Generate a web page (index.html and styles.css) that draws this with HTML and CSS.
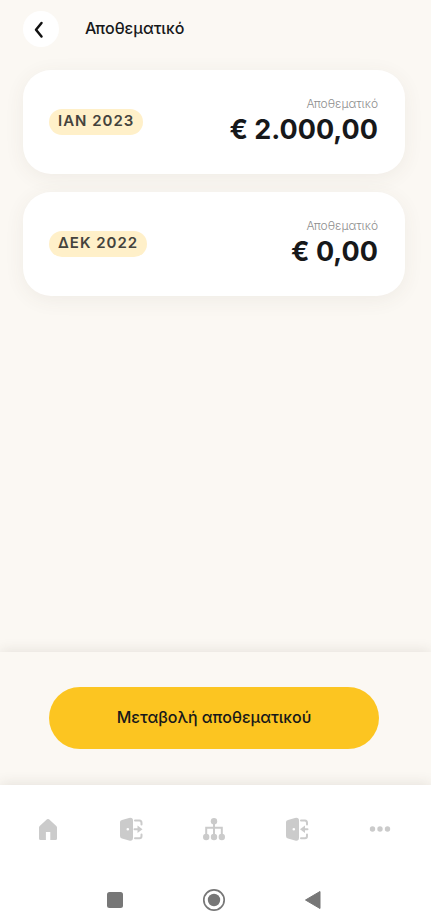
FILE: index.html
```html
<!DOCTYPE html>
<html lang="el">
<head>
<meta charset="utf-8">
<meta name="viewport" content="width=device-width, initial-scale=1">
<title>Αποθεματικό</title>
<link rel="stylesheet" href="styles.css">
</head>
<body>
<header class="topbar">
  <button class="back" type="button" aria-label="Πίσω">
    <svg width="36" height="36" viewBox="0 0 36 36"><path d="M18.500 12L13 18.700L18.500 25.500" fill="none" stroke="#111" stroke-width="2.500" stroke-linecap="round" stroke-linejoin="round"/></svg>
  </button>
  <h1 class="title">Αποθεματικό</h1>
</header>
<main class="list">
  <article class="card">
    <span class="badge">ΙΑΝ 2023</span>
    <div class="reserve">
      <span class="label">Αποθεματικό</span>
      <strong class="amount">€ 2.000,00</strong>
    </div>
  </article>
  <article class="card">
    <span class="badge">ΔΕΚ 2022</span>
    <div class="reserve">
      <span class="label">Αποθεματικό</span>
      <strong class="amount">€ 0,00</strong>
    </div>
  </article>
</main>
<section class="action">
  <button class="primary" type="button">Μεταβολή αποθεματικού</button>
</section>
<footer class="bottom">
  <nav class="tabs">
    <a class="tab" href="#home" aria-label="Αρχική">
      <svg width="24" height="24" viewBox="0 0 24 24"><path d="M11 2.300Q12 1.500 13 2.300L20.300 9Q21 9.700 21 10.500V21.500Q21 23 19.500 23H14.300V15H9.900V23H4.500Q3 23 3 21.500V10.500Q3 9.700 3.700 9Z"/></svg>
    </a>
    <a class="tab" href="#out" aria-label="Έξοδος">
      <svg width="24" height="24" viewBox="0 0 24 24"><path fill-rule="evenodd" d="M3 3L10 1Q14 .3 14 3.500V20.500Q14 24.500 10 23.500L3 21.500Q1 21 1 19V5Q1 3.500 3 3ZM8.800 11A1.300 1.300 0 1 0 8.800 13.600A1.300 1.300 0 1 0 8.800 11Z"/><path class="line" d="M16 3.500H20.500Q22.500 3.500 22.500 6V7.500M16 21.200H20.500Q22.500 21.200 22.500 19V17.500M15.500 12.300H19"/><path d="M18.500 8.500L23.500 12.300L18.500 16Z"/></svg>
    </a>
    <a class="tab" href="#structure" aria-label="Δομή">
      <svg width="24" height="24" viewBox="0 0 24 24"><circle cx="12" cy="4.200" r="3.200"/><circle cx="4.200" cy="20" r="3.200"/><circle cx="12" cy="20" r="3.200"/><circle cx="19.800" cy="20" r="3.200"/><path class="thin" d="M12 5V20M4.200 20V10.800H19.800V20"/></svg>
    </a>
    <a class="tab" href="#in" aria-label="Είσοδος">
      <svg width="24" height="24" viewBox="0 0 24 24"><path fill-rule="evenodd" d="M3 3L10 1Q14 .3 14 3.500V20.500Q14 24.500 10 23.500L3 21.500Q1 21 1 19V5Q1 3.500 3 3ZM8.800 11A1.300 1.300 0 1 0 8.800 13.600A1.300 1.300 0 1 0 8.800 11Z"/><path class="line" d="M16 3.500H20Q22 3.500 22 6V7.500M16 21.200H20Q22 21.200 22 19V17.500M19 12.300H22.500"/><path d="M20 8.500L15 12.300L20 16Z"/></svg>
    </a>
    <a class="tab" href="#more" aria-label="Περισσότερα">
      <svg width="24" height="24" viewBox="0 0 24 24"><circle cx="4.500" cy="12" r="2.700"/><circle cx="12" cy="12" r="2.700"/><circle cx="19.500" cy="12" r="2.700"/></svg>
    </a>
  </nav>
  <div class="system">
    <button class="key" type="button" aria-label="Πρόσφατα"><svg width="24" height="24" viewBox="0 0 24 24"><rect x="4" y="4" width="16" height="16" rx="2.500"/></svg></button>
    <button class="key" type="button" aria-label="Κεντρική οθόνη"><svg width="24" height="24" viewBox="0 0 24 24"><circle cx="12" cy="12" r="10.200" fill="none" stroke="#777" stroke-width="1.700"/><circle cx="12" cy="12" r="6.200"/></svg></button>
    <button class="key" type="button" aria-label="Επιστροφή"><svg width="24" height="24" viewBox="0 0 24 24"><path d="M4.500 12L19 3.500V20.500Z" stroke="#777" stroke-width="1" stroke-linejoin="round"/></svg></button>
  </div>
</footer>
</body>
</html>
```
FILE: styles.css
```css
* {
  box-sizing: border-box;
}

body {
  margin: 0;
  min-height: 100vh;
  display: flex;
  flex-direction: column;
  background: #fbf8f3;
  color: #17181a;
  font-family: Inter, "Open Sans", sans-serif;
}

button {
  margin: 0;
  padding: 0;
  border: 0;
  color: inherit;
  font: inherit;
  cursor: pointer;
}

svg {
  display: block;
}

.topbar {
  display: flex;
  align-items: center;
  gap: 26px;
  padding: 11px 26px 0 23px;
}

.back {
  border-radius: 50%;
  background: #fff;
}

.title {
  margin: 0;
  padding-bottom: 2px;
  font-size: 16px;
  line-height: 24px;
  font-weight: 500;
}

.list {
  flex: 1;
  display: flex;
  flex-direction: column;
  gap: 18px;
  padding: 23px 26px 23px 23px;
}

.card {
  display: flex;
  align-items: center;
  justify-content: space-between;
  height: 104px;
  padding: 0 27px 0 26px;
  border-radius: 28px;
  background: #fff;
  box-shadow: 0 4px 20px rgba(90, 75, 50, 0.07);
}

.badge {
  padding: 0 9px 2px;
  border-radius: 13px;
  background: #fff0c9;
  color: #44433d;
  font-size: 15px;
  line-height: 24px;
  font-weight: 600;
  letter-spacing: 1px;
}

.reserve {
  display: flex;
  flex-direction: column;
  align-items: flex-end;
  padding-bottom: 2px;
}

.label {
  color: #8e8e8e;
  font-size: 12px;
  line-height: 18px;
  font-weight: 300;
}

.amount {
  font-size: 27px;
  line-height: 34px;
  font-weight: 700;
}

.action {
  padding: 35px 52px 36px 49px;
  background: #fbf8f3;
  box-shadow: 0 -2px 12px rgba(60, 50, 40, 0.1);
}

.primary {
  display: block;
  width: 100%;
  height: 62px;
  padding-bottom: 2px;
  border-radius: 31px;
  background: #fcc521;
  font-size: 16px;
  line-height: 24px;
  font-weight: 500;
}

.bottom {
  padding-right: 3px;
  background: #fff;
  box-shadow: 0 -2px 12px rgba(60, 50, 40, 0.1);
}

.tabs {
  display: flex;
  padding: 32px 6px;
}

.tab {
  flex: 1;
  display: flex;
  justify-content: center;
  fill: #cbcbcb;
}

.line,
.thin {
  fill: none;
  stroke: #cbcbcb;
  stroke-width: 2;
  stroke-linecap: round;
}

.system {
  display: flex;
  padding: 15px 65px 11px;
}

.key {
  flex: 1;
  display: flex;
  justify-content: center;
  background: none;
  fill: #777;
}
```
